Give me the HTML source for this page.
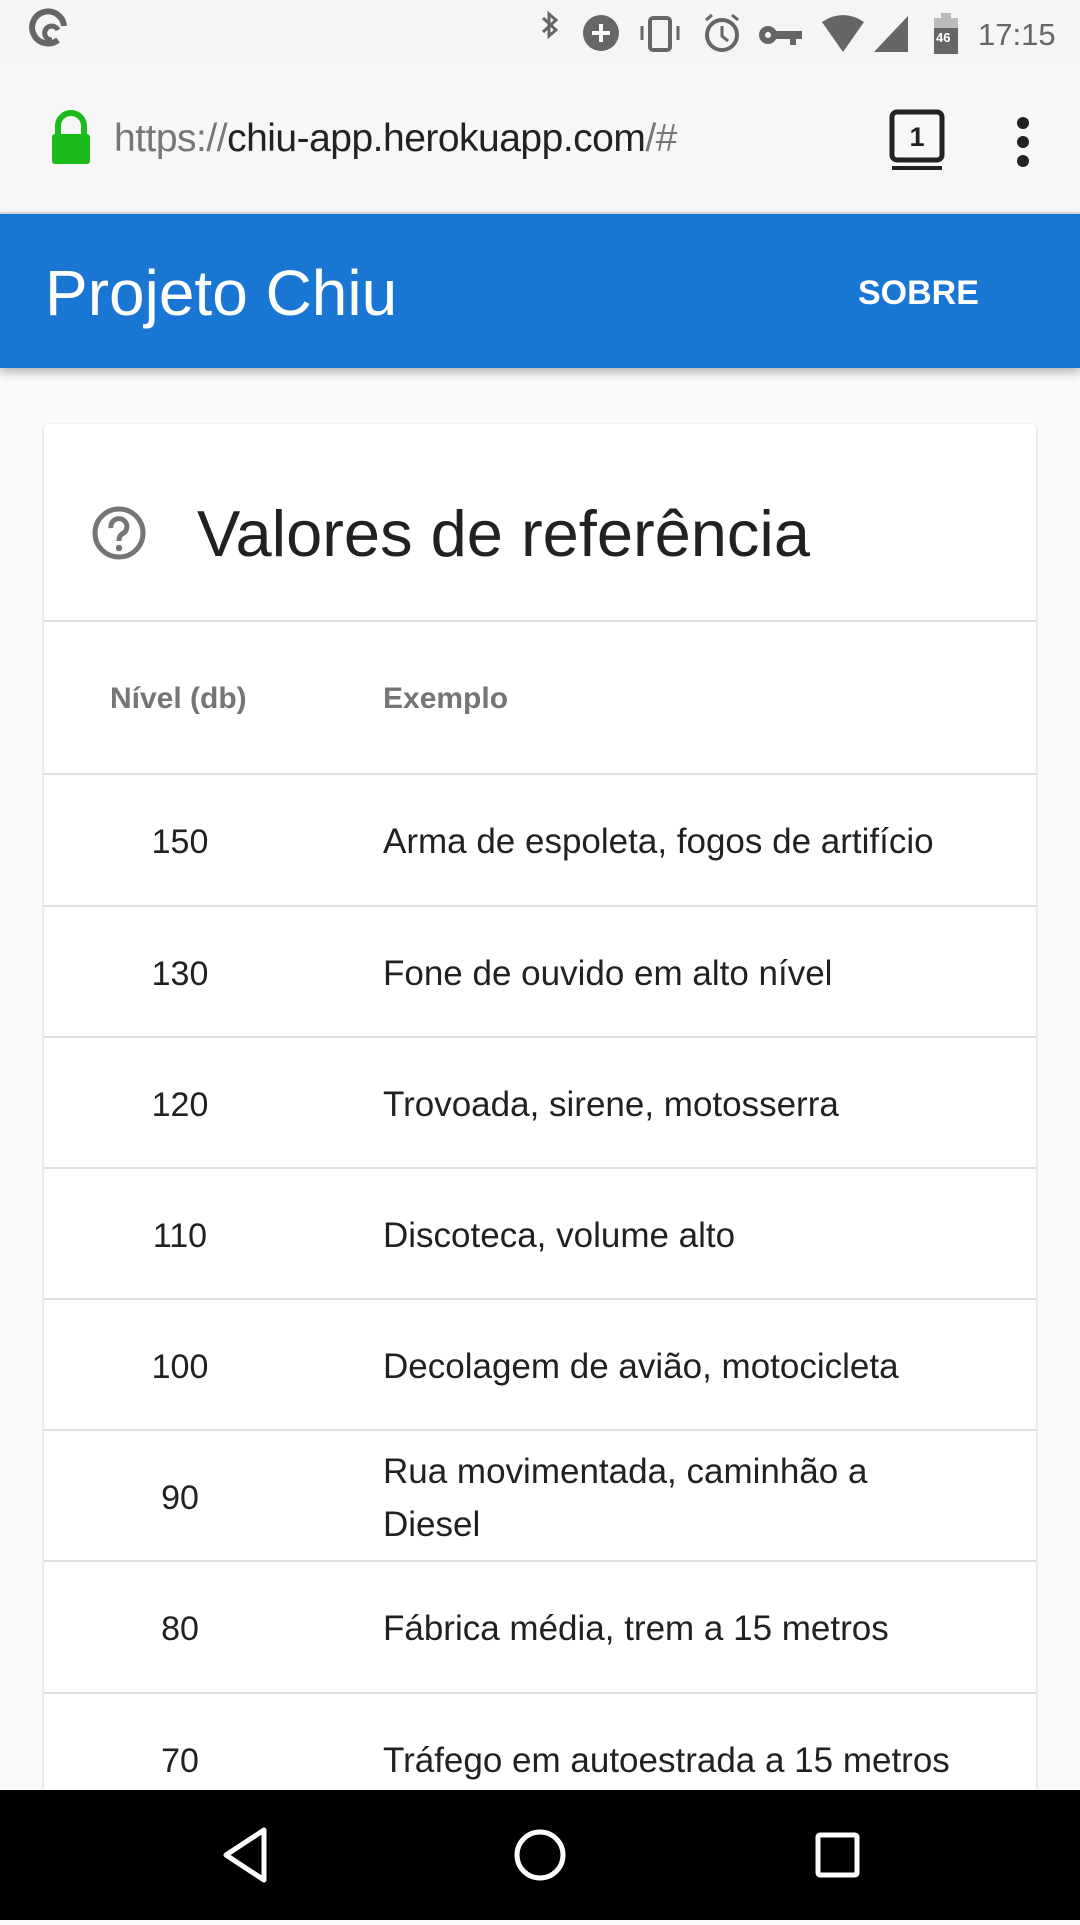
<!DOCTYPE html>
<html><head><meta charset="utf-8"><style>
*{margin:0;padding:0;box-sizing:border-box}
body{width:1080px;height:1920px;overflow:hidden;background:#fafafa;font-family:"Liberation Sans",sans-serif;position:relative}
.status{position:absolute;top:0;left:0;width:1080px;height:66px;background:#f5f5f5}
.urlbar{position:absolute;top:66px;left:0;width:1080px;height:148px;background:#f7f7f7;border-bottom:2px solid #e0e0e0}
.app{position:absolute;top:214px;left:0;width:1080px;height:154px;background:#1976d2;box-shadow:0 4px 10px rgba(0,0,0,.3);z-index:2}
.card{position:absolute;top:424px;left:44px;width:992px;height:1400px;background:#fff;box-shadow:0 1px 3px rgba(0,0,0,.2);border-radius:3px}
.row{position:absolute;left:0;width:992px;border-top:2px solid #e0e0e0}
.num{position:absolute;left:0;width:272px;text-align:center;font-size:34px;color:#212121}
.txt{position:absolute;left:339px;font-size:35px;color:#212121;line-height:53px}
.nav{position:absolute;top:1790px;left:0;width:1080px;height:130px;background:#000;z-index:3}
</style></head><body>
<div class="status">
<svg width="1080" height="66" style="position:absolute;left:0;top:0">
<path d="M58 40 A16 16 0 1 1 64 26" fill="none" stroke="#666" stroke-width="6"/>
<path d="M52 40 A7 7 0 1 1 58 30" fill="none" stroke="#666" stroke-width="5"/>
<path d="M543 18 L556 30 L549 36 V14 L556 20 L543 32" fill="none" stroke="#666" stroke-width="3"/>
<circle cx="601" cy="33" r="18" fill="#666"/><path d="M601 24V42M592 33H610" stroke="#fff" stroke-width="4"/>
<rect x="650" y="18" width="20" height="32" rx="3" fill="none" stroke="#666" stroke-width="4"/><path d="M642 26v14M678 26v14" stroke="#666" stroke-width="3"/>
<circle cx="722" cy="35" r="15" fill="none" stroke="#666" stroke-width="4"/><path d="M722 26v10l6 5M706 20l6-5M738 20l-6-5" stroke="#666" stroke-width="3" fill="none"/>
<circle cx="768" cy="35" r="9" fill="#666"/><rect x="768" y="31" width="34" height="8" fill="#666"/><rect x="790" y="35" width="6" height="10" fill="#666"/><circle cx="768" cy="35" r="3" fill="#f5f5f5"/>
<path d="M822 22 Q843 8 864 22 L843 52Z" fill="#666"/>
<path d="M874 52 L908 16 V52Z" fill="#666"/>
<rect x="934" y="18" width="24" height="36" fill="#666"/><rect x="934" y="18" width="24" height="10" fill="#bbb"/><rect x="941" y="13" width="10" height="5" fill="#bbb"/>
<text x="936" y="42" font-size="13" fill="#fff" font-family="Liberation Sans" font-weight="bold">46</text>
<text x="978" y="45" font-size="31" fill="#666" font-family="Liberation Sans">17:15</text>
</svg></div>
<div class="urlbar">
<svg width="1080" height="148" style="position:absolute;left:0;top:0">
<path d="M58 70 V60 A13 13 0 0 1 84 60 V70" fill="none" stroke="#1cbb1c" stroke-width="6"/>
<rect x="52" y="68" width="38" height="30" rx="3" fill="#1cbb1c"/>
<rect x="892" y="46" width="50" height="48" rx="5" fill="none" stroke="#222" stroke-width="5"/>
<rect x="892" y="100" width="50" height="4" fill="#222"/>
<text x="917" y="80" font-size="27" fill="#222" text-anchor="middle" font-weight="bold" font-family="Liberation Sans">1</text>
<circle cx="1023" cy="57" r="6" fill="#222"/><circle cx="1023" cy="76" r="6" fill="#222"/><circle cx="1023" cy="95" r="6" fill="#222"/>
</svg>
<div style="position:absolute;left:114px;top:51px;font-size:39px;color:#222;letter-spacing:-0.5px"><span style="color:#777">https://</span>chiu-app.herokuapp.com<span style="color:#777">/#</span></div>
</div>
<div class="app">
<div style="position:absolute;left:45px;top:42px;font-size:64px;color:#fff">Projeto Chiu</div>
<div style="position:absolute;left:858px;top:60px;font-size:34px;color:#fff;font-weight:bold">SOBRE</div>
</div>
<div class="card">
<svg width="70" height="70" style="position:absolute;left:40px;top:74px"><circle cx="35" cy="35" r="24" fill="none" stroke="#757575" stroke-width="5"/><path d="M27 30 A8 8 0 1 1 38 36 Q35 38 35 43" fill="none" stroke="#757575" stroke-width="5"/><circle cx="35" cy="50" r="3.2" fill="#757575"/></svg>
<div style="position:absolute;left:153px;top:72px;font-size:65px;color:#212121">Valores de referência</div>
<div class="row" style="top:196px;height:154px">
<div style="position:absolute;left:66px;top:60px;font-size:30px;color:#757575;font-weight:bold">Nível (db)</div>
<div style="position:absolute;left:339px;top:60px;font-size:30px;color:#757575;font-weight:bold">Exemplo</div>
</div>
<div class="row" style="top:349px"><div class="num" style="top:48px">150</div><div class="txt" style="top:40px">Arma de espoleta, fogos de artifício</div></div>
<div class="row" style="top:481px"><div class="num" style="top:48px">130</div><div class="txt" style="top:40px">Fone de ouvido em alto nível</div></div>
<div class="row" style="top:612px"><div class="num" style="top:48px">120</div><div class="txt" style="top:40px">Trovoada, sirene, motosserra</div></div>
<div class="row" style="top:743px"><div class="num" style="top:48px">110</div><div class="txt" style="top:40px">Discoteca, volume alto</div></div>
<div class="row" style="top:874px"><div class="num" style="top:48px">100</div><div class="txt" style="top:40px">Decolagem de avião, motocicleta</div></div>
<div class="row" style="top:1005px"><div class="num" style="top:48px">90</div><div class="txt" style="top:14px">Rua movimentada, caminhão a<br>Diesel</div></div>
<div class="row" style="top:1136px"><div class="num" style="top:48px">80</div><div class="txt" style="top:40px">Fábrica média, trem a 15 metros</div></div>
<div class="row" style="top:1268px"><div class="num" style="top:48px">70</div><div class="txt" style="top:40px">Tráfego em autoestrada a 15 metros</div></div>
</div>
<div class="nav">
<svg width="1080" height="130">
<path d="M264 40 L226 65 L264 90Z" fill="none" stroke="#fff" stroke-width="5" stroke-linejoin="round"/>
<circle cx="540" cy="65" r="23" fill="none" stroke="#fff" stroke-width="5"/>
<rect x="818" y="45" width="39" height="40" rx="2" fill="none" stroke="#fff" stroke-width="5"/>
</svg></div>
</body></html>
